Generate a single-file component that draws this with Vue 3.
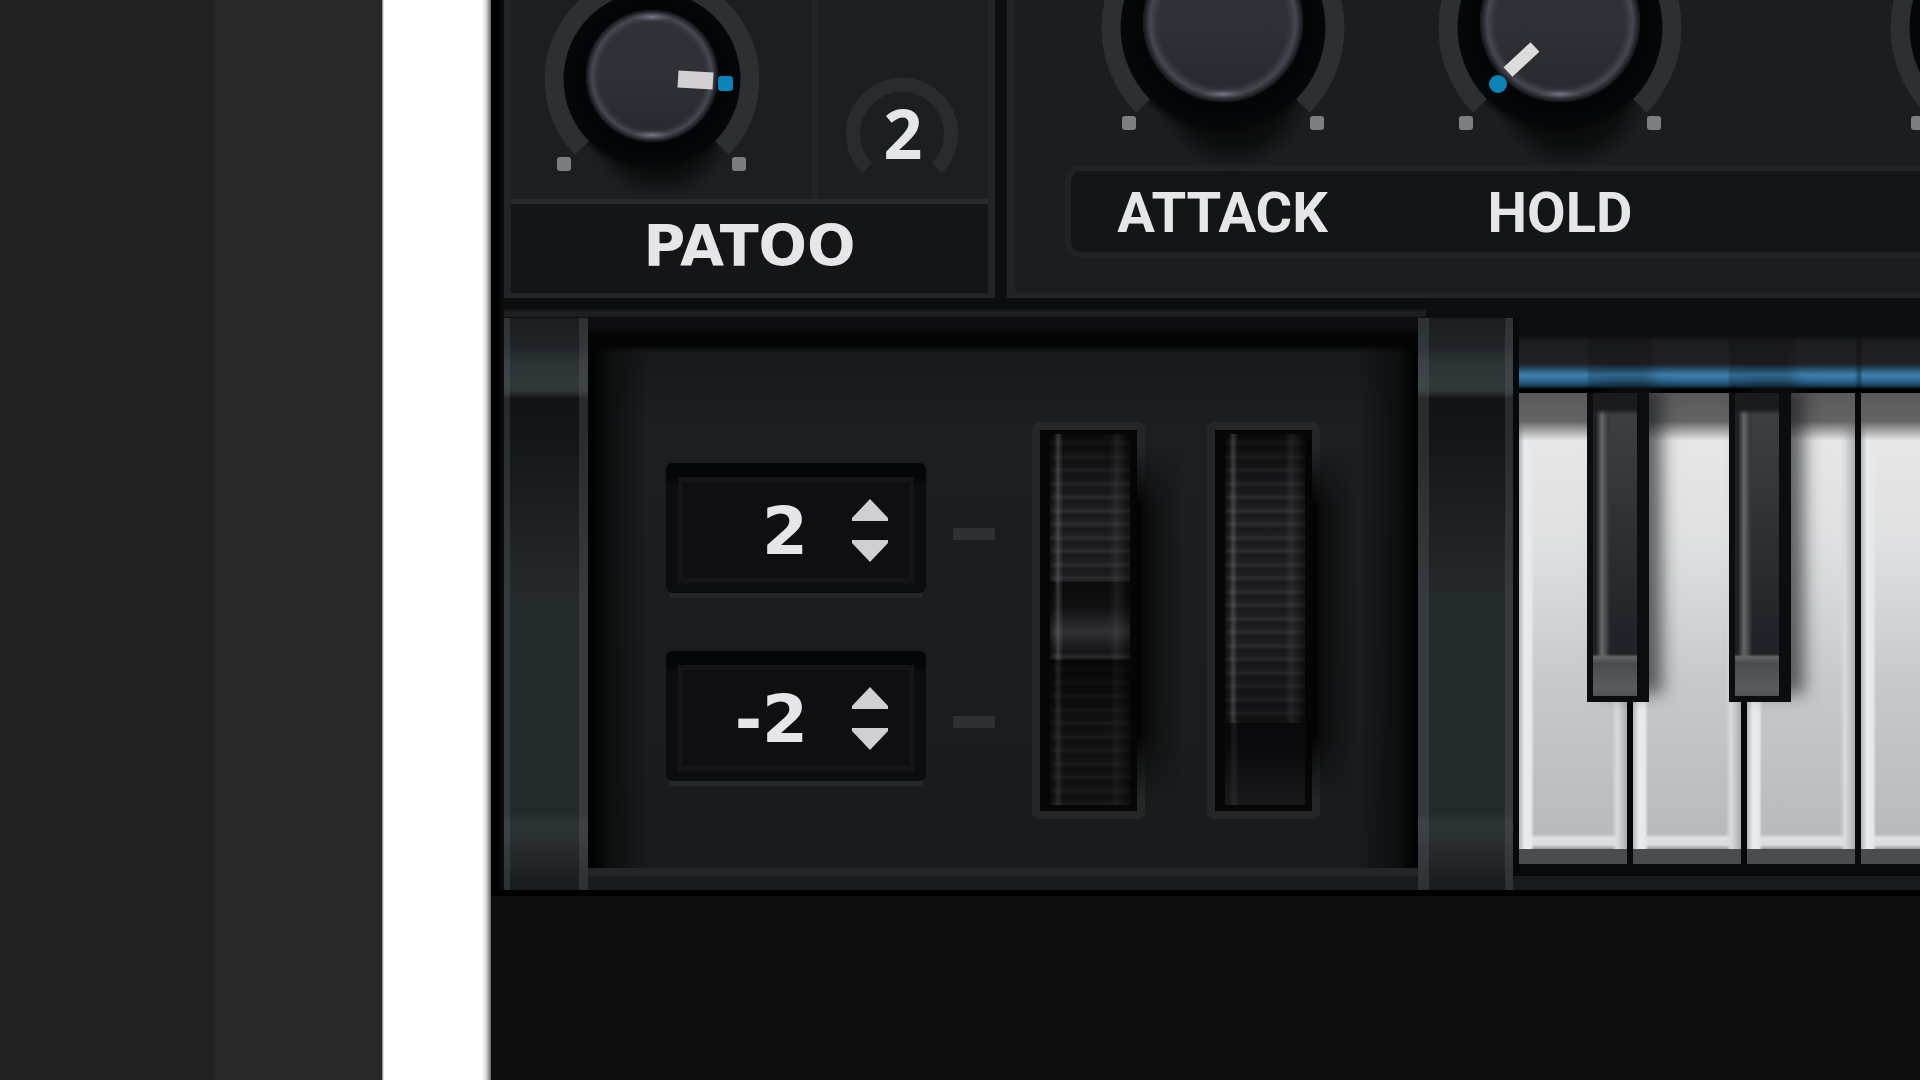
<script setup>
import { ref } from 'vue'

const arc = (cx, cy, r) => {
  const d = Math.round(r * 0.71)
  return `M${cx - d} ${cy + d}A${r} ${r} 0 1 1 ${cx + d} ${cy + d}`
}

const patoo = {
  name: 'Patoo', w: 301, h: 199, cx: 141, cy: 78, ring: 98, body: 66, by: 76,
  dots: [[53, 164], [228, 164]], value: 82,
  pointer: [167, 79, 202, 81], led: [214, 83],
}
const big = { w: 337, h: 165, cx: 169, cy: 26, ring: 112, body: 80, by: 22, dots: [[75, 123], [263, 123]] }
const envelope = [
  { ...big, name: 'Attack', value: 50 },
  { ...big, name: 'Hold', value: 0, pointer: [144, 47, 117, 72], led: [107, 84] },
  { ...big, name: 'Decay', value: 50 },
]
const bend = ref([
  { id: 'bend-up', label: 'Bend range up', value: 2 },
  { id: 'bend-down', label: 'Bend range down', value: -2 },
])
const blackKeys = [1, 2]
const whiteKeys = ['C', 'D', 'E', 'F']
</script>

<template>
  <main class="page">
    <aside class="rail-outer"></aside>
    <aside class="rail-inner"></aside>
    <div class="paper"></div>
    <section class="synth">
      <svg class="defs" width="0" height="0" aria-hidden="true">
        <defs>
          <linearGradient id="cap" x1="0" y1="0" x2="0" y2="1">
            <stop offset="0" stop-color="#303136" />
            <stop offset="0.5" stop-color="#303136" />
            <stop offset="1" stop-color="#25282d" />
          </linearGradient>
          <radialGradient id="rim" cx="0.5" cy="0.5" r="0.5">
            <stop offset="0.8" stop-color="#3c3f47" stop-opacity="0" />
            <stop offset="0.91" stop-color="#464952" />
            <stop offset="1" stop-color="#131518" />
          </radialGradient>
          <radialGradient id="well" cx="0.5" cy="0.5" r="0.5">
            <stop offset="0.8" stop-color="#040506" />
            <stop offset="0.92" stop-color="#060708" />
            <stop offset="1" stop-color="#0a0b0d" stop-opacity="0" />
          </radialGradient>
          <radialGradient id="drop" cx="0.5" cy="0.5" r="0.5">
            <stop offset="0.3" stop-color="#050505" />
            <stop offset="0.7" stop-color="#090a0a" stop-opacity="0.75" />
            <stop offset="1" stop-color="#111314" stop-opacity="0" />
          </radialGradient>
          <radialGradient id="glint">
            <stop offset="0" stop-color="#777b87" />
            <stop offset="1" stop-color="#4a4d55" stop-opacity="0" />
          </radialGradient>
        </defs>
      </svg>

      <div class="upper">
        <div class="macro">
          <div class="macro-cells">
            <label class="knob">
              <svg :width="patoo.w" :height="patoo.h">
                <ellipse :cx="patoo.cx + 8" :cy="patoo.by + 54" rx="74" ry="70" fill="url(#drop)" />
                <circle :cx="patoo.cx" :cy="patoo.cy" r="95" fill="url(#well)" />
                <path :d="arc(patoo.cx, patoo.cy, patoo.ring)" class="ring" />
                <circle :cx="patoo.cx" :cy="patoo.by" :r="patoo.body" fill="url(#cap)" />
                <circle :cx="patoo.cx" :cy="patoo.by" :r="patoo.body" fill="url(#rim)" />
                <ellipse :cx="patoo.cx" :cy="patoo.by - 59" rx="22" ry="5" fill="url(#glint)" />
                <ellipse :cx="patoo.cx" :cy="patoo.by + 59" rx="22" ry="5" fill="url(#glint)" />
                <rect v-for="d in patoo.dots" :key="d[0]" :x="d[0] - 7" :y="d[1] - 7" width="14" height="14" rx="3" fill="#7c7d7f" />
                <line :x1="patoo.pointer[0]" :y1="patoo.pointer[1]" :x2="patoo.pointer[2]" :y2="patoo.pointer[3]" class="pointer wide" />
                <rect :x="patoo.led[0] - 7" :y="patoo.led[1] - 7" width="15" height="15" rx="3" class="led" />
              </svg>
              <input v-model="patoo.value" class="hit" type="range" aria-label="Patoo" />
            </label>
            <button class="dial" type="button" aria-label="Macro 2">
              <svg width="169" height="199"><path :d="arc(84, 133, 49)" class="ring small" /></svg>
              <span>2</span>
            </button>
          </div>
          <div class="macro-name">PATOO</div>
        </div>

        <div class="envelope">
          <div class="knobs">
            <label v-for="k in envelope" :key="k.name" class="knob">
              <svg :width="k.w" :height="k.h">
                <ellipse :cx="k.cx + 10" :cy="k.by + 76" rx="78" ry="72" fill="url(#drop)" />
                <circle :cx="k.cx" :cy="k.cy" r="110" fill="url(#well)" />
                <path :d="arc(k.cx, k.cy, k.ring)" class="ring" />
                <circle :cx="k.cx" :cy="k.by" :r="k.body" fill="url(#cap)" />
                <circle :cx="k.cx" :cy="k.by" :r="k.body" fill="url(#rim)" />
                <ellipse :cx="k.cx" :cy="k.by + 72" rx="24" ry="5" fill="url(#glint)" />
                <rect v-for="d in k.dots" :key="d[0]" :x="d[0] - 7" :y="d[1] - 7" width="14" height="14" rx="3" fill="#7c7f81" />
                <template v-if="k.pointer">
                  <line :x1="k.pointer[0]" :y1="k.pointer[1]" :x2="k.pointer[2]" :y2="k.pointer[3]" class="pointer" />
                  <circle :cx="k.led[0]" :cy="k.led[1]" r="9" class="led" />
                </template>
              </svg>
              <input v-model="k.value" class="hit" type="range" :aria-label="k.name" />
            </label>
          </div>
          <div class="strip"><span>ATTACK</span><span>HOLD</span></div>
        </div>
      </div>

      <div class="lower">
        <div class="post"></div>
        <div class="bay">
          <div class="fields">
            <div v-for="f in bend" :key="f.id" class="field">
              <input :id="f.id" v-model="f.value" type="text" inputmode="numeric" :aria-label="f.label" />
              <div class="spin">
                <button type="button" aria-label="Increase" @click="f.value++">
                  <svg width="36" height="22"><path d="M18 0L36 19V22H0V19Z" fill="#d0d0d2" /></svg>
                </button>
                <button type="button" aria-label="Decrease" @click="f.value--">
                  <svg width="36" height="22"><path d="M0 0H36V3L18 22L0 3Z" fill="#d0d0d2" /></svg>
                </button>
              </div>
            </div>
          </div>
          <div class="ticks"><i></i><i></i></div>
          <label class="wheel">
            <span class="face pitch">
              <span class="ridges lit"></span>
              <span class="notch"></span>
              <span class="ridges dim"></span>
            </span>
            <input class="hit" type="range" aria-label="Pitch wheel" />
          </label>
          <label class="wheel">
            <span class="face mod">
              <span class="ridges even"></span>
              <span class="blank"></span>
            </span>
            <input class="hit" type="range" value="0" aria-label="Mod wheel" />
          </label>
        </div>
        <div class="post right"></div>
        <div class="keyboard">
          <div class="felt"></div>
          <div class="whites">
            <button v-for="k in whiteKeys" :key="k" type="button" class="white" :aria-label="k"></button>
          </div>
          <button v-for="n in blackKeys" :key="n" type="button" class="black" :class="'black-' + n" :aria-label="'Sharp ' + n"></button>
        </div>
      </div>
    </section>
  </main>
</template>

<style>
body {
  margin: 0;
  background: #0d0d0d;
}
</style>

<style scoped>
*,
.field::before {
  box-sizing: border-box;
}
button,
input {
  margin: 0;
  padding: 0;
  border: 0;
  background: none;
  font: inherit;
  color: inherit;
}
svg {
  display: block;
  overflow: visible;
}
.defs {
  position: absolute;
}
.page {
  display: flex;
  min-height: 100vh;
  overflow: hidden;
  background: #0d0d0d;
  color: #e6e6e8;
  font-family: "Noto Sans", "Open Sans", sans-serif;
  font-weight: 700;
}
.rail-outer {
  flex: 0 0 215px;
  background: #222;
}
.rail-inner {
  flex: 0 0 167px;
  background: #282828;
}
.paper {
  flex: 0 0 109px;
  background: linear-gradient(90deg, #777 0, #fff 2px, #fff 100px, #ddd 104px, #666 109px);
}
.synth {
  flex: 1;
  min-width: 0;
  overflow: hidden;
}
.upper {
  display: flex;
  gap: 12px;
  height: 298px;
  padding-left: 13px;
  background: linear-gradient(90deg, #000 6px, #0c0e10 14px);
}
.macro {
  flex: 0 0 491px;
  display: flex;
  flex-direction: column;
  border: solid #222528;
  border-width: 0 7px 5px;
  background: #1b1f22;
}
.macro-cells {
  display: flex;
  height: 199px;
}
.knob {
  position: relative;
  display: block;
  flex: none;
}
.hit {
  position: absolute;
  inset: 0;
  width: 100%;
  height: 100%;
  opacity: 0;
}
.ring {
  fill: none;
  stroke: #2d2f33;
  stroke-width: 19px;
}
.ring.small {
  stroke: #292c2f;
  stroke-width: 14px;
}
.pointer {
  stroke: #dcdcdc;
  stroke-width: 13px;
}
.pointer.wide {
  stroke: #d2d0d2;
  stroke-width: 17px;
}
.led {
  fill: #0c82b8;
}
.dial {
  position: relative;
  flex: 1;
  border-left: 6px solid #212528;
}
.dial span {
  position: absolute;
  inset: 83px 0 auto;
  font-size: 68px;
  line-height: 100px;
  text-align: center;
}
.macro-name {
  flex: 1;
  border-top: 5px solid #282b2d;
  background: #131517;
  font-family: "DejaVu Sans", sans-serif;
  font-size: 57px;
  line-height: 84px;
  text-align: center;
}
.envelope {
  flex: 1;
  min-width: 0;
  border: solid #212427;
  border-width: 0 0 5px 8px;
  background: #1a1e20;
  overflow: hidden;
}
.knobs {
  display: flex;
  height: 165px;
  padding-left: 39px;
}
.knobs .knob:last-child {
  margin-left: 115px;
}
.strip {
  display: grid;
  grid-template-columns: 303px 372px;
  height: 93px;
  margin: 0 -20px 0 50px;
  border: 6px solid #1f2324;
  border-radius: 16px;
  background: #131617;
  font-family: Roboto, sans-serif;
  font-size: 56px;
  line-height: 84px;
  text-align: center;
}
.lower {
  display: flex;
  height: 598px;
  padding: 20px 0 6px 13px;
  background:
    linear-gradient(#000, #000) 0 100% / 100% 6px no-repeat,
    linear-gradient(#0b0d0e 10px, #1d1f20 14px, #1d1f20 18px, #0b0d0e 20px) 13px 0 / 922px 20px no-repeat,
    linear-gradient(90deg, #000 6px, #0c0e10 14px);
}
.post {
  flex: 0 0 84px;
  border: solid rgba(110, 118, 122, 0.24);
  border-width: 0 9px 0 6px;
  background: linear-gradient(#1a1d1f 0, #20252a 30px, #2c3134 44px, #31383a 68px, #2f3436 73px, #111416 81px, #14181a 130px, #1b1e20 180px, #24292c 280px, #24292c 495px, #2e3336 504px, #2a2f32 520px, #171b1e 572px) border-box;
}
.post.right {
  flex-basis: 95px;
  border-width: 0 8px 0 11px;
}
.bay {
  flex: 0 0 830px;
  display: flex;
  align-items: flex-start;
  height: 572px;
  padding: 104px 0 0 78px;
  border-bottom: 14px solid #181c1e;
  background:
    linear-gradient(#222628, #222628) 0 100% / 100% 8px no-repeat,
    linear-gradient(#0e0e10 9px, #050505 15px, #050505 28px, transparent 34px),
    linear-gradient(90deg, #020303 6px, #0d0f10 22px, transparent 60px, transparent 770px, #0d0f10 810px, #020303 824px),
    linear-gradient(#15191b 34px, #1b1f21 110px, #191d1f 400px, #171b1b 540px);
}
.fields {
  display: grid;
  gap: 58px;
  margin-top: 41px;
}
.field {
  display: flex;
  align-items: center;
  width: 260px;
  height: 130px;
  padding: 4px 12px 0;
  border-radius: 6px;
  background: linear-gradient(#050608 14px, #0c0d10 24px);
  box-shadow: 0 8px 0 -3px #25272a;
}
.field::before {
  content: "";
  flex: none;
  width: 236px;
  height: 106px;
  margin-right: -236px;
  border: 5px solid #151518;
  background: #0f0f12;
}
.field input {
  position: relative;
  flex: none;
  width: 130px;
  height: 100px;
  padding-top: 2px;
  font-family: "DejaVu Sans", sans-serif;
  font-size: 66px;
  text-align: right;
}
.spin {
  position: relative;
  display: grid;
  gap: 19px;
  margin-left: 44px;
}
.spin button {
  display: block;
  width: 36px;
  height: 22px;
}
.ticks {
  display: grid;
  gap: 176px;
  margin: 106px 37px 0 27px;
}
.ticks i {
  width: 42px;
  height: 12px;
  border-radius: 2px;
  background: #2d3134;
}
.wheel {
  position: relative;
  width: 113px;
  height: 397px;
  padding: 4px 7px 6px 10px;
  border: 8px solid #242628;
  border-radius: 7px;
  background: #060607;
}
.wheel::after {
  content: "";
  position: absolute;
  left: 92px;
  top: 16px;
  width: 50px;
  height: 352px;
  background: linear-gradient(90deg, #050505 8px, rgba(10, 10, 10, 0.75) 18px, transparent);
  -webkit-mask: linear-gradient(transparent, #000 60px, #000 290px, transparent);
  mask: linear-gradient(transparent, #000 60px, #000 290px, transparent);
}
.wheel + .wheel {
  margin-left: 62px;
}
.face {
  display: flex;
  flex-direction: column;
  height: 100%;
  background: #141416;
}
.ridges,
.notch {
  --sheen: linear-gradient(90deg, rgba(0, 0, 0, 0.4), transparent 4px, rgba(150, 150, 155, 0.3) 8px, transparent 13px, transparent 60px, rgba(120, 120, 125, 0.14) 66px, rgba(0, 0, 0, 0.3) 78px);
}
.ridges {
  background:
    var(--sheen),
    linear-gradient(rgba(0, 0, 0, 0.6), transparent 70px, transparent 200px, rgba(0, 0, 0, 0.4) 289px),
    repeating-linear-gradient(#19191c 0, #1f1f22 6px, #2d2d30 9px, #19191c 13px, #1f1f22 20px, #2d2d30 23px, #19191c 27px);
}
.lit {
  height: 148px;
}
.notch {
  height: 78px;
  background:
    var(--sheen),
    linear-gradient(#0b0b0c 0, #111113 26px, #1e1e21 36px, #323236 50px, #1f1f22 62px, #151517 70px, #2b2b2d 75px, #0e0e0f 78px);
}
.dim {
  flex: 1;
  filter: brightness(0.6);
}
.even {
  height: 289px;
}
.blank {
  flex: 1;
  background:
    linear-gradient(90deg, transparent 4px, rgba(150, 150, 155, 0.12) 9px, transparent 14px),
    linear-gradient(#09090b 20px, #19191b);
}
.keyboard {
  position: relative;
  flex: 1;
  min-width: 0;
  height: 572px;
  padding-left: 6px;
  overflow: hidden;
  border-bottom: 14px solid #171b1e;
  background: #07090a;
}
.felt {
  height: 75px;
  background:
    linear-gradient(#0d0e10, #0d0e10) 0 0 / 100% 19px no-repeat,
    linear-gradient(90deg, transparent 68px, rgba(0, 0, 0, 0.18) 70px, rgba(0, 0, 0, 0.18) 126px, transparent 140px, transparent 209px, rgba(0, 0, 0, 0.18) 211px, rgba(0, 0, 0, 0.18) 268px, transparent 282px, transparent 336px, rgba(0, 0, 0, 0.3) 339px, rgba(0, 0, 0, 0.3) 341px, transparent 344px),
    linear-gradient(#0d0e10 18px, #1b1c20 22px, #202227 46px, #23465f 50px, #4080ac 57px, #2c6690 63px, #173c55 68px, #000 71px);
}
.whites {
  display: flex;
  gap: 6px;
}
.white {
  flex: 0 0 108px;
  height: 471px;
  border-bottom: 15px solid #494d4f;
  background:
    linear-gradient(rgba(90, 90, 90, 1) 0, rgba(100, 100, 100, 1) 28px, rgba(110, 110, 110, 0) 48px),
    linear-gradient(90deg, #b5b8ba 0, #eaecee 6px, #e6e9eb 12px, transparent 15px, transparent 93px, #d8dcde 98px, #aaaeb0 108px),
    linear-gradient(transparent 441px, #dfe2e4 445px, #d9dcde 452px, #94989a 456px),
    linear-gradient(#ebebec 0, #dfe0e1 150px, #c8cbcc 280px, #b7bbbd 440px);
}
.black {
  position: absolute;
  top: 75px;
  width: 62px;
  height: 309px;
  border: solid #0b0d0f;
  border-width: 0 12px 6px 6px;
  background:
    linear-gradient(#1a1b1d 16px, transparent 22px),
    linear-gradient(transparent 261px, #65686b 264px, #494c4f 270px, #5a5d60 295px, #515457 303px),
    linear-gradient(90deg, #1f2225 3px, #65686b 9px, #36393c 15px, transparent 17px),
    linear-gradient(#3f4245, #202428 240px);
  box-shadow: 15px -6px 16px -2px rgba(25, 28, 34, 0.65);
}
.black-1 {
  left: 74px;
}
.black-2 {
  left: 216px;
}
</style>
